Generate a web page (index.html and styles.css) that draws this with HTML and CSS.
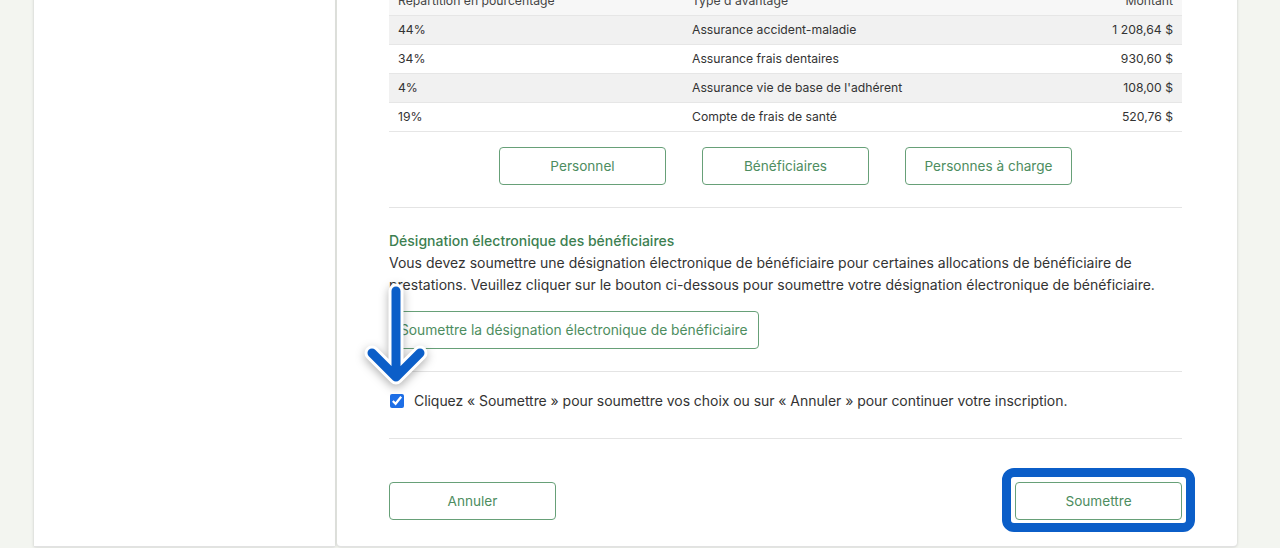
FILE: index.html
```html
<!DOCTYPE html>
<html lang="fr">
<head>
<meta charset="utf-8">
<title>Inscription</title>
<link rel="stylesheet" href="styles.css">
</head>
<body>
<div class="page">
  <aside class="sidebar"></aside>
  <main class="main">
    <div class="content">
      <table class="alloc">
        <thead>
          <tr><th>Répartition en pourcentage</th><th>Type d'avantage</th><th class="num">Montant</th></tr>
        </thead>
        <tbody>
          <tr class="alt"><td>44%</td><td>Assurance accident-maladie</td><td class="num">1 208,64 $</td></tr>
          <tr><td>34%</td><td>Assurance frais dentaires</td><td class="num">930,60 $</td></tr>
          <tr class="alt"><td>4%</td><td>Assurance vie de base de l'adhérent</td><td class="num">108,00 $</td></tr>
          <tr><td>19%</td><td>Compte de frais de santé</td><td class="num">520,76 $</td></tr>
        </tbody>
      </table>
      <div class="btn-row">
        <button class="btn btn-wide">Personnel</button>
        <button class="btn btn-wide">Bénéficiaires</button>
        <button class="btn btn-wide">Personnes à charge</button>
      </div>
      <hr class="sep sep-1">
      <section class="designation">
        <h3 class="title">Désignation électronique des bénéficiaires</h3>
        <p class="text">Vous devez soumettre une désignation électronique de bénéficiaire pour certaines allocations de bénéficiaire de prestations. Veuillez cliquer sur le bouton ci-dessous pour soumettre votre désignation électronique de bénéficiaire.</p>
        <div class="arrow-anchor">
          <button class="btn btn-auto">Soumettre la désignation électronique de bénéficiaire</button>
          <svg class="arrow" width="80" height="110" viewBox="0 0 80 110" aria-hidden="true">
            <g fill="none" stroke-linecap="round" stroke-linejoin="round">
              <path d="M32 8 V92 M8 70 L32 94 L56 70" stroke="#ffffff" stroke-width="15"/>
              <path d="M32 8 V92 M8 70 L32 94 L56 70" stroke="#0b5ec8" stroke-width="9"/>
            </g>
          </svg>
        </div>
      </section>
      <hr class="sep sep-2">
      <label class="confirm">
        <input type="checkbox" class="check" checked>
        <span>Cliquez « Soumettre » pour soumettre vos choix ou sur « Annuler » pour continuer votre inscription.</span>
      </label>
      <hr class="sep sep-3">
      <div class="actions">
        <button class="btn btn-wide">Annuler</button>
        <div class="highlight-wrap">
          <button class="btn btn-wide">Soumettre</button>
          <span class="highlight"></span>
        </div>
      </div>
    </div>
  </main>
</div>
</body>
</html>
```
FILE: styles.css
```css
* { box-sizing: border-box; }
html, body { margin: 0; padding: 0; }
body {
  background: #f3f5f0;
  font-family: "Inter", "Liberation Sans", sans-serif;
  color: #333333;
  height: 548px;
  overflow: hidden;
}
.page {
  display: flex;
  align-items: flex-start;
  padding-left: 34px;
  margin-top: -14px;
}
.sidebar {
  width: 301px;
  height: 561px;
  background: #ffffff;
  box-shadow: 0 0 3px rgba(0,0,0,0.18);
  border-bottom: 1px solid #e2e2e2;
}
.main {
  width: 900px;
  height: 561px;
  margin-left: 2px;
  background: #ffffff;
  box-shadow: 0 0 3px rgba(0,0,0,0.18);
  border-bottom: 1px solid #e2e2e2;
  border-radius: 0 0 4px 4px;
  padding: 0 55px 0 52px;
}
.content { width: 793px; }

.alloc {
  width: 100%;
  border-collapse: collapse;
  font-size: 12.2px;
}
.alloc th, .alloc td {
  height: 29px;
  padding: 0 9px;
  text-align: left;
  font-weight: 400;
  border-bottom: 1px solid #e6e6e6;
}
.alloc th { background: #f7f7f7; color: #444; }
.alloc th:first-child, .alloc td:first-child { width: 294px; }
.alloc .num { text-align: right; }
.alloc tr.alt td { background: #f1f1f1; }

.btn {
  font-family: inherit;
  font-size: 13.6px;
  color: #4d8d60;
  background: #ffffff;
  border: 1px solid #67a078;
  border-radius: 4px;
  height: 38px;
  cursor: pointer;
}
.btn-wide { width: 167px; }
.btn-auto { padding: 0 10px; font-size: 13.8px; }

.btn-row {
  display: flex;
  justify-content: center;
  gap: 36px;
  margin-top: 15px;
}
.sep {
  border: 0;
  border-top: 1px solid #e4e4e4;
  margin: 0;
}
.sep-1 { margin-top: 22px; }
.designation { padding-top: 24px; }
.title {
  margin: 0;
  font-size: 14px;
  font-weight: 500;
  color: #3d7f51;
  line-height: 18px;
}
.text {
  margin: 2px 0 0;
  font-size: 14px;
  line-height: 22px;
}
.arrow-anchor {
  position: relative;
  margin-top: 15px;
}
.arrow {
  position: absolute;
  left: -25px;
  top: -28px;
  filter: drop-shadow(0 3px 5px rgba(0,0,0,0.3));
}
.sep-2 { margin-top: 22px; }
.confirm {
  display: flex;
  align-items: center;
  gap: 10px;
  height: 66px;
  padding-bottom: 8px;
  font-size: 14px;
  letter-spacing: -0.05px;
}
.check {
  margin: 0 0 0 1px;
  width: 14px;
  height: 14px;
  accent-color: #1d6ee6;
}
.actions {
  display: flex;
  justify-content: space-between;
  margin-top: 43px;
}
.highlight-wrap { position: relative; }
.highlight {
  position: absolute;
  left: -13px;
  right: -13px;
  top: -14px;
  bottom: -12px;
  border: 9px solid #0b5ec8;
  border-radius: 12px;
  pointer-events: none;
}
```
